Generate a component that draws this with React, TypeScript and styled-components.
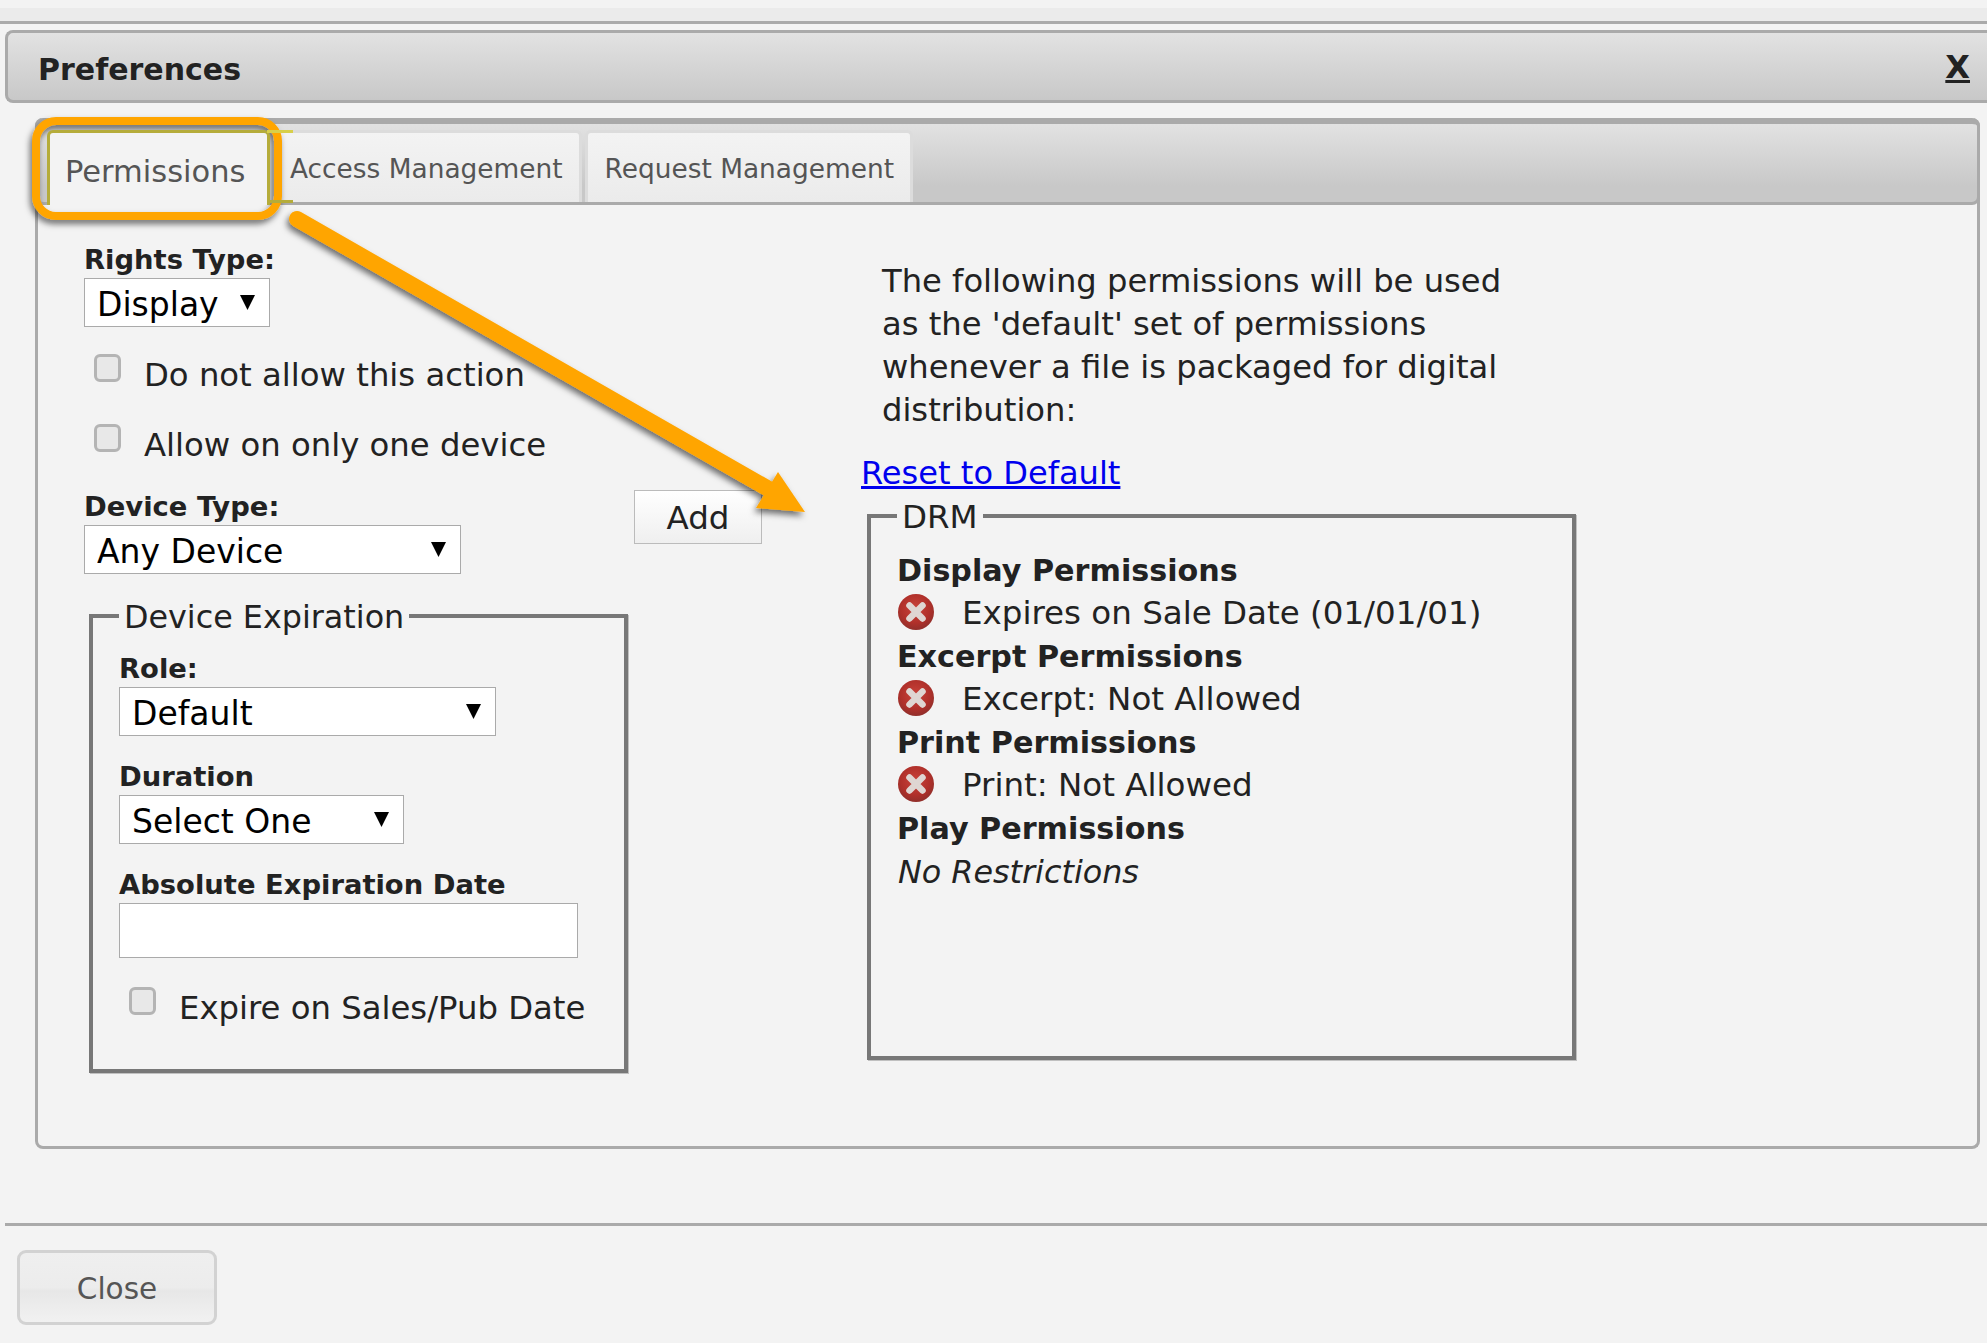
import React, { useId } from "react";
import styled, { createGlobalStyle } from "styled-components";

const Global = createGlobalStyle`
  html, body { margin: 0; padding: 0; background: #f3f3f3; }
  body { font-family: "DejaVu Sans", Verdana, sans-serif; color: #222; }
  * { box-sizing: border-box; }
`;

const Page = styled.div`
  position: relative;
  width: 1987px;
  height: 1343px;
  overflow: hidden;
  background: #f3f3f3;
  padding-top: 8px;
`;
const TopStrip = styled.div`
  height: 16px;
  background: #ebebeb;
  border-bottom: 3px solid #aaa;
`;
const Dialog = styled.div`
  padding: 6px 0 0 5px;
`;
const TitleBar = styled.div`
  height: 73px;
  border: 3px solid #aaa;
  border-right: none;
  border-radius: 8px 0 0 8px;
  background: linear-gradient(#e2e2e2, #c8c8c8);
  display: flex;
  align-items: center;
  justify-content: space-between;
  padding: 5px 17px 0 30px;
`;
const Title = styled.span`
  font-size: 30px;
  font-weight: 700;
  color: #222;
`;
const CloseX = styled.a`
  font-size: 32px;
  font-weight: 700;
  color: #222;
  text-decoration: underline;
  margin-top: -4px;
`;
const TabsPanel = styled.div`
  margin: 15px 7px 0 30px;
  height: 1031px;
  border: 3px solid #aaa;
  border-top: none;
  border-radius: 8px;
`;
const TabHead = styled.div`
  margin: 0 -3px;
  height: 87px;
  border: 3px solid #aaa;
  border-top-width: 6px;
  border-radius: 8px;
  background: linear-gradient(#e2e2e2, #c8c8c8 80%);
  display: flex;
  align-items: flex-end;
  padding-left: 9px;
`;
const ActiveTab = styled.div`
  position: relative;
  z-index: 1;
  flex: none;
  width: 223px;
  height: 75px;
  margin-bottom: -3px;
  padding: 5px 0 0 15px;
  display: flex;
  align-items: center;
  font-size: 30.5px;
  color: #555;
  background: #f3f3f3;
  border: 3px solid #b5ac3a;
  border-bottom: none;
  border-radius: 6px 6px 0 0;
  &::before,
  &::after {
    content: "";
    position: absolute;
    left: 100%;
    width: 26px;
    height: 3px;
  }
  &::before {
    top: -3px;
    background: #d8cf4a;
  }
  &::after {
    bottom: 2px;
    background: #b5ac3a;
  }
`;
const Tab = styled.div`
  flex: none;
  height: 72px;
  padding: 1px 16px 0 17px;
  margin-right: 3px;
  display: flex;
  align-items: center;
  font-size: 26.4px;
  color: #555;
  background: linear-gradient(#f3f3f3, #ebebeb);
  border: 3px solid #dcdcdc;
  border-bottom: none;
  border-radius: 6px 6px 0 0;
`;
const TabBody = styled.div`
  display: flex;
`;
const LeftCol = styled.div`
  width: 600px;
  padding: 0 0 0 46px;
`;
const FormLabel = styled.div<{ $top?: number }>`
  font-size: 27.4px;
  font-weight: 700;
  line-height: 36px;
  color: #222;
  margin-top: ${(p) => p.$top ?? 0}px;
`;
const SelectWrap = styled.div<{ $w: number }>`
  position: relative;
  width: ${(p) => p.$w}px;
  height: 49px;
  &::after {
    content: "";
    position: absolute;
    right: 15px;
    top: 17px;
    width: 15px;
    height: 15px;
    background: #000;
    clip-path: polygon(0 0, 100% 0, 50% 100%);
  }
`;
const NativeSelect = styled.select`
  appearance: none;
  width: 100%;
  height: 100%;
  background: #fff;
  border: 1px solid #aaa;
  border-radius: 0;
  padding: 3px 0 0 12px;
  font-family: inherit;
  font-size: 33px;
  color: #000;
`;
const CheckRow = styled.label<{ $top: number; $left: number; $gap: number }>`
  display: flex;
  align-items: flex-start;
  margin-top: ${(p) => p.$top}px;
  margin-left: ${(p) => p.$left}px;
  gap: ${(p) => p.$gap}px;
  font-size: 32.3px;
  line-height: 43px;
  color: #222;
  white-space: nowrap;
`;
const Check = styled.input.attrs({ type: "checkbox" })`
  appearance: none;
  width: 27px;
  height: 28px;
  margin: 0;
  background: #e8e8e8;
  border: 3px solid #b4b4b4;
  border-radius: 6px;
`;
const DeviceRow = styled.div`
  display: flex;
  justify-content: space-between;
  align-items: flex-start;
  width: 678px;
`;
const AddButton = styled.button`
  width: 128px;
  height: 54px;
  margin-top: 23px;
  background: linear-gradient(#fff, #efefef);
  border: 1px solid #bbb;
  font-family: inherit;
  font-size: 32.5px;
  color: #222;
  padding: 2px 0 0;
`;
const Group = styled.fieldset<{ $w: number; $h: number }>`
  margin: 0;
  width: ${(p) => p.$w}px;
  height: ${(p) => p.$h}px;
  border: 4px solid #777;
  box-shadow: 1px 1px 0 #c0c0c0;
`;
const GroupLegend = styled.legend<{ $size: number }>`
  font-size: ${(p) => p.$size}px;
  line-height: 36px;
  color: #222;
  padding: 2px 5px 0;
  margin: 0 0 -2px;
`;
const ExpireGroup = styled(Group)`
  margin-top: 23px;
  padding: 0 0 0 26px;
  margin-left: 5px;
`;
const DateInput = styled.input`
  display: block;
  width: 459px;
  height: 55px;
  background: #fff;
  border: 1px solid #aaa;
  padding: 0;
`;
const RightCol = styled.div`
  padding: 0 0 0 223px;
`;
const Intro = styled.p`
  margin: 55px 0 0 21px;
  width: 660px;
  font-size: 32.2px;
  line-height: 43px;
  color: #222;
`;
const ResetLink = styled.a`
  display: block;
  margin-top: 20px;
  font-size: 32.1px;
  line-height: 43px;
  color: #0000ee;
  text-decoration: underline;
`;
const DrmGroup = styled(Group)`
  margin: 2px 0 0 6px;
  padding: 16px 0 0 26px;
`;
const PermTitle = styled.div`
  font-size: 30.2px;
  font-weight: 700;
  line-height: 43px;
  color: #222;
`;
const PermRow = styled.div`
  display: flex;
  align-items: center;
  gap: 28px;
  font-size: 32.5px;
  line-height: 43px;
  height: 43px;
  color: #222;
`;
const PermNote = styled.div`
  font-size: 31.8px;
  font-style: italic;
  line-height: 43px;
  color: #222;
  padding-left: 1px;
`;
const DenyMark = styled.svg`
  flex: none;
  margin: -3px 0 0 1px;
`;
const Divider = styled.div`
  margin: 74px 0 0 0;
  height: 3px;
  background: #aaa;
`;
const Footer = styled.div`
  padding: 24px 0 0 12px;
`;
const CloseButton = styled.button`
  width: 200px;
  height: 75px;
  border: 3px solid #d2d2d2;
  border-radius: 9px;
  background: linear-gradient(#efefef 0, #ececec 50%, #e7e7e7 55%, #f1f1f1 100%);
  font-family: inherit;
  font-size: 29.5px;
  color: #555;
  padding: 2px 0 0;
`;
const Overlay = styled.svg`
  position: absolute;
  left: 0;
  top: 0;
  pointer-events: none;
`;

const DenyIcon = () => {
  const id = useId();
  return (
    <DenyMark width="36" height="36" viewBox="0 0 36 36">
      <defs>
        <radialGradient id={id} cx="48%" cy="40%" r="62%">
          <stop offset="0" stopColor="#c9433a" />
          <stop offset="0.65" stopColor="#b0302a" />
          <stop offset="1" stopColor="#8e2f2b" />
        </radialGradient>
      </defs>
      <circle cx="18" cy="18" r="18" fill={`url(#${id})`} />
      <path d="M11.5 11.5 L24.5 24.5 M24.5 11.5 L11.5 24.5" stroke="#dfd6d2" strokeWidth="6.5" strokeLinecap="round" />
    </DenyMark>
  );
};

export default function App() {
  return (
    <Page>
      <Global />
      <TopStrip />
      <Dialog>
        <TitleBar>
          <Title>Preferences</Title>
          <CloseX>X</CloseX>
        </TitleBar>
        <TabsPanel>
          <TabHead>
            <ActiveTab>Permissions</ActiveTab>
            <Tab>Access Management</Tab>
            <Tab>Request Management</Tab>
          </TabHead>
          <TabBody>
            <LeftCol>
              <FormLabel $top={37}>Rights Type:</FormLabel>
              <SelectWrap $w={186}>
                <NativeSelect defaultValue="Display">
                  <option>Display</option>
                </NativeSelect>
              </SelectWrap>
              <CheckRow $top={27} $left={10} $gap={23}>
                <Check />
                <span>Do not allow this action</span>
              </CheckRow>
              <CheckRow $top={27} $left={10} $gap={23}>
                <Check />
                <span>Allow on only one device</span>
              </CheckRow>
              <DeviceRow>
                <div>
                  <FormLabel $top={22}>Device Type:</FormLabel>
                  <SelectWrap $w={377}>
                    <NativeSelect defaultValue="Any Device">
                      <option>Any Device</option>
                    </NativeSelect>
                  </SelectWrap>
                </div>
                <AddButton>Add</AddButton>
              </DeviceRow>
              <ExpireGroup $w={539} $h={476}>
                <GroupLegend $size={31.8}>Device Expiration</GroupLegend>
                <FormLabel $top={18}>Role:</FormLabel>
                <SelectWrap $w={377}>
                  <NativeSelect defaultValue="Default">
                    <option>Default</option>
                  </NativeSelect>
                </SelectWrap>
                <FormLabel $top={23}>Duration</FormLabel>
                <SelectWrap $w={285}>
                  <NativeSelect defaultValue="Select One">
                    <option>Select One</option>
                  </NativeSelect>
                </SelectWrap>
                <FormLabel $top={23}>Absolute Expiration Date</FormLabel>
                <DateInput type="text" />
                <CheckRow $top={29} $left={10} $gap={23}>
                  <Check />
                  <span>Expire on Sales/Pub Date</span>
                </CheckRow>
              </ExpireGroup>
            </LeftCol>
            <RightCol>
              <Intro>
                The following permissions will be used as the 'default' set of permissions whenever a file is packaged for digital distribution:
              </Intro>
              <ResetLink href="#">Reset to Default</ResetLink>
              <DrmGroup $w={709} $h={563}>
                <GroupLegend $size={32.5}>DRM</GroupLegend>
                <PermTitle>Display Permissions</PermTitle>
                <PermRow><DenyIcon />Expires on Sale Date (01/01/01)</PermRow>
                <PermTitle>Excerpt Permissions</PermTitle>
                <PermRow><DenyIcon />Excerpt: Not Allowed</PermRow>
                <PermTitle>Print Permissions</PermTitle>
                <PermRow><DenyIcon />Print: Not Allowed</PermRow>
                <PermTitle>Play Permissions</PermTitle>
                <PermNote>No Restrictions</PermNote>
              </DrmGroup>
            </RightCol>
          </TabBody>
        </TabsPanel>
        <Divider />
        <Footer>
          <CloseButton>Close</CloseButton>
        </Footer>
      </Dialog>
      <Overlay width="1987" height="1343" viewBox="0 0 1987 1343">
        <defs>
          <filter id="shadow" x="-20%" y="-20%" width="140%" height="140%">
            <feDropShadow dx="-2" dy="4" stdDeviation="3" floodColor="#000" floodOpacity="0.55" />
          </filter>
        </defs>
        <g filter="url(#shadow)">
          <rect x="36" y="121" width="242" height="95" rx="20" fill="none" stroke="#ffa500" strokeWidth="8" />
          <path d="M297 219 L774 492" stroke="#ffa500" strokeWidth="16" strokeLinecap="round" />
          <path d="M778 472 L805 512 L756 508 Z" fill="#ffa500" />
        </g>
      </Overlay>
    </Page>
  );
}
